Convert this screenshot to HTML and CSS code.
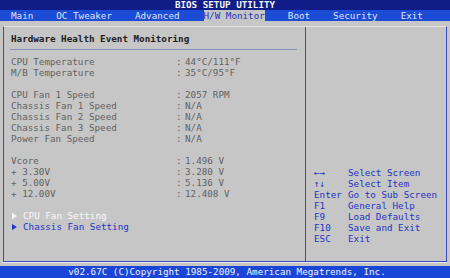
FILE: index.html
```html
<!DOCTYPE html>
<html lang="en">
<head>
    <meta charset="UTF-8">
    <meta name="viewport" content="width=device-width, initial-scale=1.0">
    <title>BIOS Setup Utility</title>
    <link rel="stylesheet" href="styles.css">
</head>
<body>

    <div class="title-bar">BIOS SETUP UTILITY</div>

    <div class="menu-bar">
        <span class="menu-item">Main</span>
        <span class="menu-item">OC Tweaker</span>
        <span class="menu-item">Advanced</span>
        <span class="menu-item active">H/W Monitor</span>
        <span class="menu-item">Boot</span>
        <span class="menu-item">Security</span>
        <span class="menu-item">Exit</span>
    </div>

    <div class="main">
        <div class="frame">
            <div class="left-panel">
                <div class="heading">Hardware Health Event Monitoring</div>
                <div class="separator"></div>

                <div class="row"><span class="label">CPU Temperature</span><span class="colon">:</span><span>44°C/111°F</span></div>
                <div class="row"><span class="label">M/B Temperature</span><span class="colon">:</span><span>35°C/95°F</span></div>
                <div class="row blank"></div>
                <div class="row"><span class="label">CPU Fan 1 Speed</span><span class="colon">:</span><span>2057 RPM</span></div>
                <div class="row"><span class="label">Chassis Fan 1 Speed</span><span class="colon">:</span><span>N/A</span></div>
                <div class="row"><span class="label">Chassis Fan 2 Speed</span><span class="colon">:</span><span>N/A</span></div>
                <div class="row"><span class="label">Chassis Fan 3 Speed</span><span class="colon">:</span><span>N/A</span></div>
                <div class="row"><span class="label">Power Fan Speed</span><span class="colon">:</span><span>N/A</span></div>
                <div class="row blank"></div>
                <div class="row"><span class="label">Vcore</span><span class="colon">:</span><span>1.496 V</span></div>
                <div class="row"><span class="label">+ 3.30V</span><span class="colon">:</span><span>3.280 V</span></div>
                <div class="row"><span class="label">+ 5.00V</span><span class="colon">:</span><span>5.136 V</span></div>
                <div class="row"><span class="label">+ 12.00V</span><span class="colon">:</span><span>12.408 V</span></div>
                <div class="row blank"></div>

                <div class="submenu selected"><span class="arrow"></span>CPU Fan Setting</div>
                <div class="submenu"><span class="arrow"></span>Chassis Fan Setting</div>
            </div>

            <div class="right-panel">
                <div class="help-row"><span class="key">←→</span><span>Select Screen</span></div>
                <div class="help-row"><span class="key">↑↓</span><span>Select Item</span></div>
                <div class="help-row"><span class="key">Enter</span><span>Go to Sub Screen</span></div>
                <div class="help-row"><span class="key">F1</span><span>General Help</span></div>
                <div class="help-row"><span class="key">F9</span><span>Load Defaults</span></div>
                <div class="help-row"><span class="key">F10</span><span>Save and Exit</span></div>
                <div class="help-row"><span class="key">ESC</span><span>Exit</span></div>
            </div>
        </div>
    </div>

    <div class="footer">v02.67C (C)Copyright 1985-2009, American Megatrends, Inc.</div>

</body>
</html>
```

FILE: styles.css
```css
body {
    margin: 0;
    padding: 0;
    width: 450px;
    height: 278px;
    display: flex;
    flex-direction: column;
    font-family: "DejaVu Sans Mono", "Liberation Mono", monospace;
    font-size: 9.25px;
    line-height: 11px;
    background-color: #c6c6c6;
    overflow: hidden;
}

.title-bar {
    height: 10px;
    line-height: 10px;
    background-color: #101c88;
    color: #f4f4f4;
    font-weight: bold;
    text-align: center;
}

.menu-bar {
    height: 11px;
    line-height: 11px;
    background-color: #1c4cd6;
    display: flex;
    gap: 23px;
    padding-left: 11px;
}

.menu-item {
    color: #dfe4f4;
}

.menu-item.active {
    background-color: #c6c6c6;
    color: #1c34c0;
    margin-left: 1px;
}

.main {
    flex: 1;
    padding: 5px 3px 4px 3px;
}

.frame {
    height: 234px;
    display: flex;
    border: 1px solid #3c4cc0;
    border-top-color: #e4e4e4;
    box-shadow: 0 1px 0 #e8e8e8;
}

.left-panel {
    width: 286px;
    padding: 6px 8px 0 7px;
    border-right: 1px solid #3c4cc0;
    color: #626262;
}

.heading {
    color: #202020;
    font-weight: bold;
}

.separator {
    height: 1px;
    margin: 5px 0 6px -1px;
    background-color: #8890b8;
}

.row {
    display: flex;
    height: 11px;
}

.label {
    width: 165px;
}

.colon {
    width: 9px;
}

.submenu {
    color: #2434c8;
    display: flex;
    align-items: center;
}

.submenu.selected {
    color: #f8f8f8;
}

.arrow {
    width: 0;
    height: 0;
    border-top: 3px solid transparent;
    border-bottom: 3px solid transparent;
    border-left: 5px solid currentColor;
    margin: 0 6px 0 1px;
}

.right-panel {
    flex: 1;
    padding: 140px 0 0 8px;
    color: #2434c4;
}

.help-row {
    display: flex;
    height: 11px;
}

.key {
    width: 34px;
}

.footer {
    height: 12px;
    line-height: 12px;
    background-color: #1a46d8;
    color: #f2f4fc;
    text-align: center;
    padding-left: 4px;
}
```
